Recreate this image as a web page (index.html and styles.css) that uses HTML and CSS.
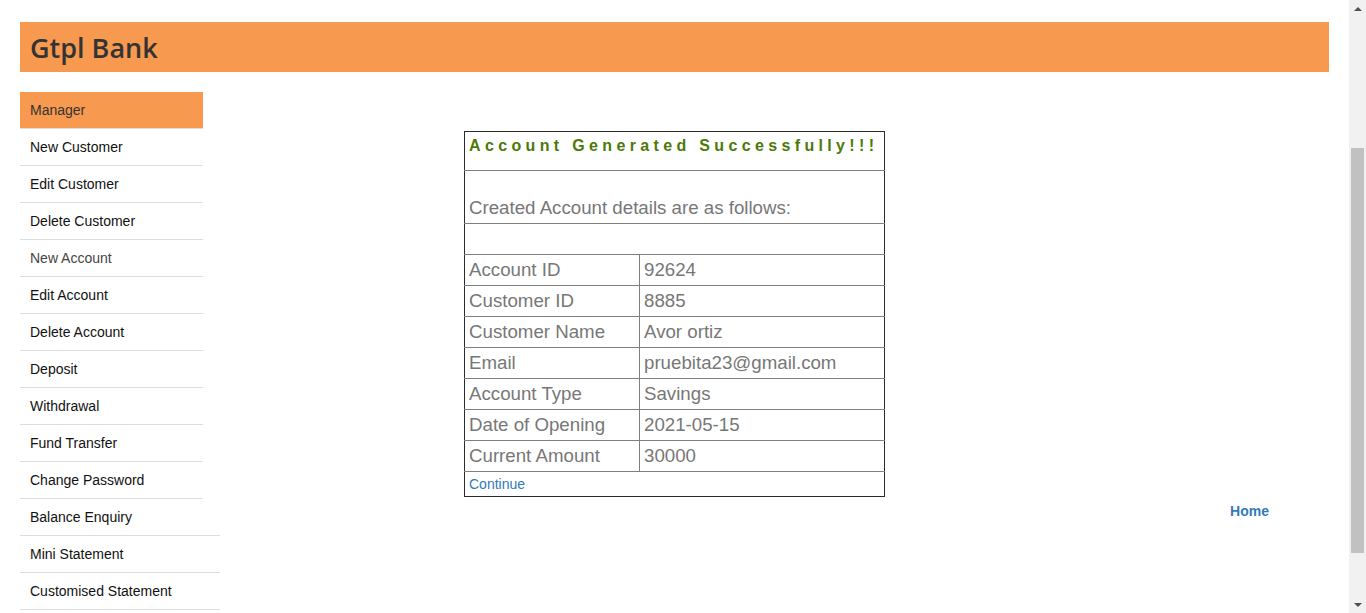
FILE: index.html
```html
<!DOCTYPE html>
<html>
<head>
<meta charset="utf-8">
<title>Gtpl Bank</title>
<link rel="stylesheet" href="styles.css">
</head>
<body>
<div class="page">
  <header class="banner"><h1 class="brand">Gtpl Bank</h1></header>
  <div class="layout">
    <nav class="menu">
      <div class="menu-head">Manager</div>
      <a class="menu-item" href="#">New Customer</a>
      <a class="menu-item" href="#">Edit Customer</a>
      <a class="menu-item" href="#">Delete Customer</a>
      <a class="menu-item muted" href="#">New Account</a>
      <a class="menu-item" href="#">Edit Account</a>
      <a class="menu-item" href="#">Delete Account</a>
      <a class="menu-item" href="#">Deposit</a>
      <a class="menu-item" href="#">Withdrawal</a>
      <a class="menu-item" href="#">Fund Transfer</a>
      <a class="menu-item" href="#">Change Password</a>
      <a class="menu-item wide" href="#">Balance Enquiry</a>
      <a class="menu-item wide" href="#">Mini Statement</a>
      <a class="menu-item wide" href="#">Customised Statement</a>
    </nav>
    <main class="content">
      <table class="result">
        <tr><td colspan="2" class="title">Account Generated Successfully!!!</td></tr>
        <tr><td colspan="2" class="intro">Created Account details are as follows:</td></tr>
        <tr><td colspan="2" class="blank"></td></tr>
        <tr><td class="label">Account ID</td><td class="value">92624</td></tr>
        <tr><td class="label">Customer ID</td><td class="value">8885</td></tr>
        <tr><td class="label">Customer Name</td><td class="value">Avor ortiz</td></tr>
        <tr><td class="label">Email</td><td class="value">pruebita23@gmail.com</td></tr>
        <tr><td class="label">Account Type</td><td class="value">Savings</td></tr>
        <tr><td class="label">Date of Opening</td><td class="value">2021-05-15</td></tr>
        <tr><td class="label">Current Amount</td><td class="value">30000</td></tr>
        <tr><td colspan="2" class="continue"><a href="#">Continue</a></td></tr>
      </table>
      <div class="home-row"><a class="home" href="#">Home</a></div>
    </main>
  </div>
</div>
<div class="scrollbar" aria-hidden="true">
  <div class="sb-arrow up"></div>
  <div class="sb-track"><div class="sb-thumb"></div></div>
  <div class="sb-arrow down"></div>
</div>
</body>
</html>
```
FILE: styles.css
```css
html, body {
  margin: 0;
  padding: 0;
  background: #fff;
}
body {
  font-family: "Liberation Sans", Arial, sans-serif;
  font-size: 14px;
  color: #333;
  display: flex;
  height: 613px;
  overflow: hidden;
}
.page {
  flex: 1;
  padding: 22px 20px 0 20px;
}
.banner {
  background: #f79a50;
  height: 50px;
  display: flex;
  align-items: center;
  padding-left: 10px;
}
.brand {
  margin: 0;
  font-family: "Open Sans", sans-serif;
  font-weight: 600;
  font-size: 27px;
  color: #333;
  letter-spacing: 0;
}
.layout {
  display: flex;
  margin-top: 20px;
}
.menu {
  width: 200px;
  flex: none;
  display: flex;
  flex-direction: column;
}
.menu-head {
  width: 183px;
  height: 37px;
  line-height: 36px;
  background: #f79a50;
  padding-left: 10px;
  box-sizing: border-box;
  color: #333;
  border-bottom: 1px solid #ddd;
}
.menu-item {
  width: 183px;
  height: 37px;
  line-height: 36px;
  padding-left: 10px;
  box-sizing: border-box;
  border-bottom: 1px solid #ddd;
  color: #111;
  text-decoration: none;
}
.menu-item.muted {
  color: #444;
}
.menu-item.wide {
  width: 200px;
}
.content {
  flex: 1;
  padding-top: 39px;
  padding-left: 244px;
}
.result {
  border-collapse: collapse;
  width: 421px;
}
.result td {
  border: 1px solid #808080;
  padding: 0 0 0 4px;
  color: #777;
  font-size: 18.7px;
  height: 31px;
  box-sizing: border-box;
}
.result tr:first-child td {
  border-top-color: #2b2b2b;
}
.result tr:last-child td {
  border-bottom-color: #2b2b2b;
}
.result td:first-child {
  border-left-color: #2b2b2b;
}
.result td:last-child {
  border-right-color: #2b2b2b;
}
.result td.title {
  height: 39px;
  font-size: 16px;
  font-weight: bold;
  color: #4c7a08;
  letter-spacing: 4.35px;
  vertical-align: top;
  padding-top: 5px;
}
.result td.intro {
  height: 53px;
  vertical-align: bottom;
  padding-bottom: 4px;
}
.result td.blank {
  height: 31px;
}
.result td.label {
  width: 175px;
}
.result td.continue {
  height: 25px;
  font-size: 14px;
}
.continue a {
  color: #337ab7;
  text-decoration: none;
}
.home-row {
  display: flex;
  justify-content: flex-end;
  padding-right: 60px;
  margin-top: 6px;
}
.home {
  color: #337ab7;
  font-weight: bold;
  text-decoration: none;
}
.scrollbar {
  width: 17px;
  flex: none;
  background: #f1f1f1;
  display: flex;
  flex-direction: column;
  height: 613px;
}
.sb-arrow {
  height: 17px;
  flex: none;
  display: flex;
  align-items: center;
  justify-content: center;
}
.sb-arrow::before {
  content: "";
  width: 0;
  height: 0;
  border-left: 4px solid transparent;
  border-right: 4px solid transparent;
}
.sb-arrow.up::before {
  border-bottom: 4px solid #505050;
}
.sb-arrow.down::before {
  border-top: 4px solid #505050;
}
.sb-track {
  flex: 1;
  padding: 131px 2px 43px 2px;
  display: flex;
}
.sb-thumb {
  flex: 1;
  background: #c1c1c1;
}
```
